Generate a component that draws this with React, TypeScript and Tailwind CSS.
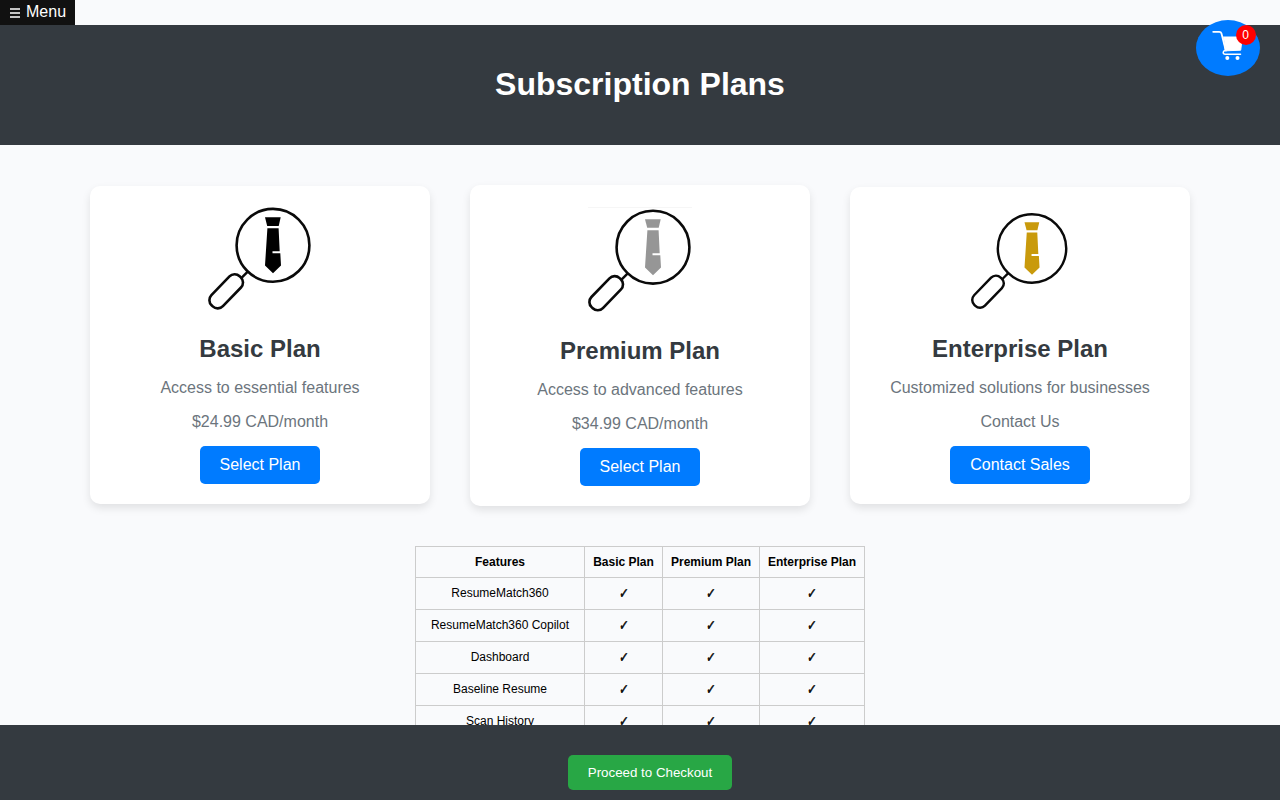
import React from "react";

type Plan = {
  name: string;
  description: string;
  price: string;
  action: string;
  tie: string;
  cardClass?: string;
  imageClass: string;
  imageTransform: string;
  topEdge?: boolean;
};

const plans: Plan[] = [
  {
    name: "Basic Plan",
    description: "Access to essential features",
    price: "$24.99 CAD/month",
    action: "Select Plan",
    tie: "#000000",
    cardClass: "mb-px",
    imageClass: "h-[129px]",
    imageTransform: "translate(0 0.3)",
  },
  {
    name: "Premium Plan",
    description: "Access to advanced features",
    price: "$34.99 CAD/month",
    action: "Select Plan",
    tie: "#969696",
    imageClass: "h-[132px]",
    imageTransform: "translate(0 3.2)",
    topEdge: true,
  },
  {
    name: "Enterprise Plan",
    description: "Customized solutions for businesses",
    price: "Contact Us",
    action: "Contact Sales",
    tie: "#c99a0c",
    imageClass: "h-[128px]",
    imageTransform: "translate(3.4 4.8) scale(0.94)",
  },
];

const features = [
  "ResumeMatch360",
  "ResumeMatch360 Copilot",
  "Dashboard",
  "Baseline Resume",
  "Scan History",
];

const PlanImage: React.FC<{ plan: Plan }> = ({ plan }) => (
  <svg className={`w-[120px] shrink-0 ${plan.imageClass}`} fill="none">
    {plan.topEdge && <path d="M8 2.5h104" stroke="#f6f6f6" />}
    <g transform={plan.imageTransform}>
      <circle cx="73" cy="39" r="36.4" stroke="#0a0a0a" strokeWidth="2.6" />
      <path d="M41 72l7-7" stroke="#0a0a0a" strokeWidth="2.4" />
      <rect
        x="6"
        y="77"
        width="40.4"
        height="16"
        rx="7.2"
        transform="rotate(-46 26.2 85)"
        stroke="#0a0a0a"
        strokeWidth="2.6"
      />
      <path d="M65 11h15.7l-2 8.6H67.2z" fill={plan.tie} />
      <path
        d="M67.4 22h11.2l1.1 23h-7.2v2h7.8l.7 12.2-8 7.8-8-7.8z"
        fill={plan.tie}
      />
    </g>
  </svg>
);

const PlanCard: React.FC<{ plan: Plan }> = ({ plan }) => (
  <div
    className={`flex w-[340px] flex-col items-center rounded-[10px] bg-white p-5 shadow-[0_4px_8px_rgba(0,0,0,0.1)] ${plan.cardClass ?? ""}`}
  >
    <PlanImage plan={plan} />
    <h2 className="text-2xl leading-[27px] font-bold text-[#343a40]">
      {plan.name}
    </h2>
    <p className="mt-[17px] leading-[18px] text-[#6c757d]">
      {plan.description}
    </p>
    <p className="mt-4 leading-[18px] text-[#6c757d]">{plan.price}</p>
    <a
      href="#"
      className="mt-[15px] rounded-[5px] bg-[#007bff] px-5 py-2.5 leading-[18px] text-white"
    >
      {plan.action}
    </a>
  </div>
);

const Cart: React.FC = () => (
  <button className="fixed top-5 right-5 h-14 w-16 rounded-[50%] bg-[#007bff]">
    <svg
      className="absolute top-[10px] left-4 h-8 w-8"
      fill="none"
      stroke="#fff"
      strokeLinecap="round"
      strokeLinejoin="round"
    >
      <path d="M1.2 1.8h6q1.8 0 2.3 1.8l4.3 17" strokeWidth="1.8" />
      <path d="M11.5 7h18.8l-1.6 13.2-14.9.6z" fill="#fff" strokeWidth="1" />
      <path d="M13 20.5q-1.8.4-1.8 2t2 1.7h15.3" strokeWidth="1.5" />
      <circle cx="15.3" cy="28" r="2" fill="#fff" stroke="none" />
      <circle cx="25.5" cy="28" r="2" fill="#fff" stroke="none" />
    </svg>
    <span className="absolute top-[5px] right-1 flex h-5 w-5 items-center justify-center rounded-full bg-[#ff0000] pr-px text-xs text-white">
      0
    </span>
  </button>
);

const App: React.FC = () => {
  return (
    <div className="flex h-screen flex-col overflow-hidden bg-[#f9fafc] font-['Liberation_Sans',Arial,sans-serif] text-base text-black">
      <button className="flex h-[25px] w-[75px] shrink-0 items-center gap-1.5 bg-[#111] pb-0.5 pl-2.5 text-white">
        <svg className="mt-0.5 h-[10px] w-[10px]" stroke="#fff" strokeWidth="1.5">
          <path d="M0 1h10M0 5h10M0 9h10" />
        </svg>
        Menu
      </button>
      <header className="flex h-[120px] shrink-0 items-center justify-center bg-[#343a40] pb-[3px]">
        <h1 className="text-[32px] leading-9 font-bold text-white">
          Subscription Plans
        </h1>
      </header>
      <Cart />

      <main className="flex min-h-0 flex-1 flex-col items-center overflow-hidden">
        <section className="mt-10 flex h-[321px] shrink-0 items-center gap-10">
          {plans.map((plan) => (
            <PlanCard key={plan.name} plan={plan} />
          ))}
        </section>

        <table className="mt-10 w-[450px] table-fixed border-collapse text-center text-xs leading-[14px] [&_td]:border [&_td]:border-[#ccc] [&_td]:pb-0.5 [&_th]:border [&_th]:border-[#ccc]">
          <colgroup>
            <col className="w-[169px]" />
            <col className="w-[78px]" />
            <col className="w-[97px]" />
            <col className="w-[105px]" />
          </colgroup>
          <thead>
            <tr className="h-[31px]">
              <th>Features</th>
              <th>Basic Plan</th>
              <th>Premium Plan</th>
              <th>Enterprise Plan</th>
            </tr>
          </thead>
          <tbody>
            {features.map((feature) => (
              <tr key={feature} className="h-8">
                <td>{feature}</td>
                {plans.map((plan) => (
                  <td key={plan.name}>
                    <span className="inline-block origin-center scale-x-90 scale-y-115 -skew-x-6 leading-3 [-webkit-text-stroke:0.5px_black]">
                      ✓
                    </span>
                  </td>
                ))}
              </tr>
            ))}
          </tbody>
        </table>
      </main>

      <footer className="flex h-[75px] shrink-0 justify-center bg-[#343a40] pt-[30px] pl-5">
        <button className="h-[35px] w-[164px] rounded-[5px] bg-[#28a745] text-[13.333px] text-white">
          Proceed to Checkout
        </button>
      </footer>
    </div>
  );
};

export default App;
